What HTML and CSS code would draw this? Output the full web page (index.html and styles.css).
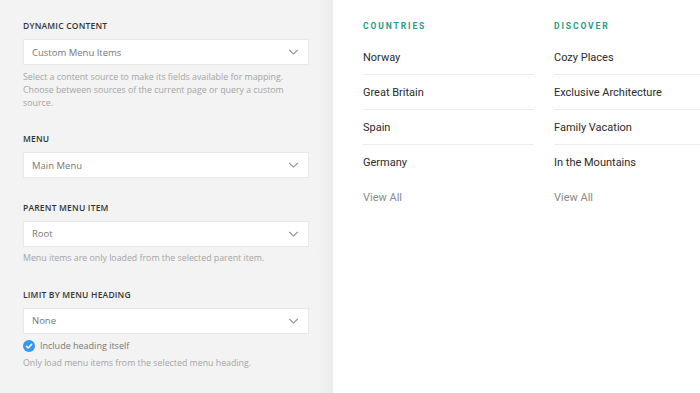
FILE: index.html
```html
<!DOCTYPE html>
<html lang="en">
  <head>
    <meta charset="UTF-8" />
    <title>Menu Builder</title>
    <link rel="stylesheet" href="styles.css">
  </head>
  <body>
    <div class="page">
      <!-- Settings sidebar -->
      <aside class="panel">
        <div class="field">
          <div class="label">Dynamic Content</div>
          <div class="select">
            <span>Custom Menu Items</span>
            <svg class="chevron" viewBox="0 0 12 7"><polyline points="1,1 6,6 11,1" /></svg>
          </div>
          <p class="help">Select a content source to make its fields available for mapping. Choose between sources of the current page or query a custom source.</p>
        </div>

        <div class="field">
          <div class="label">Menu</div>
          <div class="select">
            <span>Main Menu</span>
            <svg class="chevron" viewBox="0 0 12 7"><polyline points="1,1 6,6 11,1" /></svg>
          </div>
        </div>

        <div class="field">
          <div class="label">Parent Menu Item</div>
          <div class="select">
            <span>Root</span>
            <svg class="chevron" viewBox="0 0 12 7"><polyline points="1,1 6,6 11,1" /></svg>
          </div>
          <p class="help">Menu items are only loaded from the selected parent item.</p>
        </div>

        <div class="field">
          <div class="label">Limit by Menu Heading</div>
          <div class="select">
            <span>None</span>
            <svg class="chevron" viewBox="0 0 12 7"><polyline points="1,1 6,6 11,1" /></svg>
          </div>
          <label class="check">
            <svg class="check-icon" viewBox="0 0 12 12">
              <circle cx="6" cy="6" r="6" />
              <polyline points="3.4,6.2 5.2,8 8.7,4.3" />
            </svg>
            Include heading itself
          </label>
          <p class="help">Only load menu items from the selected menu heading.</p>
        </div>
      </aside>

      <!-- Menu preview -->
      <main class="preview">
        <nav class="column">
          <div class="heading">Countries</div>
          <ul class="items">
            <li>Norway</li>
            <li>Great Britain</li>
            <li>Spain</li>
            <li>Germany</li>
          </ul>
          <div class="view-all">View All</div>
        </nav>
        <nav class="column">
          <div class="heading">Discover</div>
          <ul class="items">
            <li>Cozy Places</li>
            <li>Exclusive Architecture</li>
            <li>Family Vacation</li>
            <li>In the Mountains</li>
          </ul>
          <div class="view-all">View All</div>
        </nav>
      </main>
    </div>
  </body>
</html>
```

FILE: styles.css
```css
body {
  margin: 0;
  background: #fff;
  overflow: hidden;
}

.page {
  display: flex;
  height: 393px;
}

/* Sidebar */
.panel {
  width: 333px;
  flex-shrink: 0;
  box-sizing: border-box;
  padding: 20px 24px 0 23px;
  background: linear-gradient(to right, #f3f3f3 calc(100% - 16px), #ececec);
  font-family: "Open Sans", sans-serif;
}

.field {
  margin-bottom: 23.5px;
}

.label {
  font-family: "Open Sans", sans-serif;
  font-weight: 600;
  font-size: 8.5px;
  line-height: 12px;
  letter-spacing: 0.2px;
  text-transform: uppercase;
  color: #333;
  margin-bottom: 7px;
}

.select {
  display: flex;
  align-items: center;
  justify-content: space-between;
  height: 26px;
  box-sizing: border-box;
  padding: 0 9px 0 8px;
  background: #fff;
  border: 1px solid #e8e8e8;
  font-size: 9.5px;
  color: #777;
}

.chevron {
  width: 11px;
  height: 6px;
  fill: none;
  stroke: #888;
  stroke-width: 1.2;
}

.help {
  margin: 5.5px 0 0;
  font-size: 8.8px;
  line-height: 13px;
  color: #a5a5a5;
  padding-right: 20px;
}

.check {
  display: flex;
  align-items: center;
  gap: 5px;
  margin-top: 6px;
  height: 12px;
  font-size: 9px;
  color: #777;
}

.check-icon {
  width: 12px;
  height: 12px;
}

.check-icon circle {
  fill: #3696f3;
}

.check-icon polyline {
  fill: none;
  stroke: #fff;
  stroke-width: 1.5;
  stroke-linecap: round;
  stroke-linejoin: round;
}

/* Preview */
.preview {
  display: flex;
  gap: 20px;
  padding: 20px 0 0 30px;
  font-family: Roboto, sans-serif;
  overflow: hidden;
}

.column {
  width: 171px;
  flex-shrink: 0;
}

.heading {
  font-size: 8.5px;
  font-weight: 700;
  line-height: 12px;
  letter-spacing: 1.9px;
  text-transform: uppercase;
  color: #1e9e85;
  margin-bottom: 8px;
}

.items {
  list-style: none;
  margin: 0;
  padding: 0;
}

.items li {
  padding: 10px 0 9px;
  line-height: 15px;
  font-size: 11px;
  color: #2a2a2a;
  border-bottom: 1px solid #ececec;
}

.items li:last-child {
  border-bottom-color: transparent;
}

.view-all {
  padding: 10px 0;
  line-height: 15px;
  font-size: 11px;
  color: #8a8a8a;
}
```
